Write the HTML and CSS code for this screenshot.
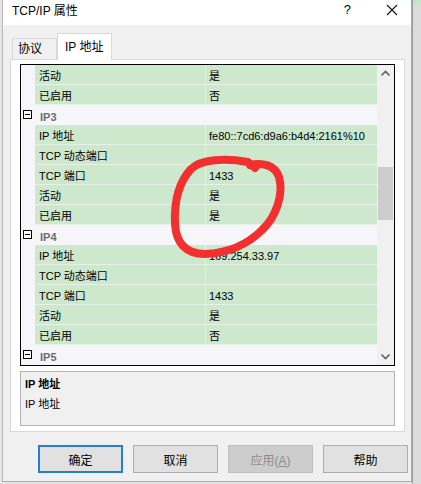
FILE: index.html
```html
<!DOCTYPE html>
<html lang="zh-CN">
<head>
    <meta charset="UTF-8">
    <title>TCP/IP 属性</title>
    <link rel="stylesheet" href="styles.css">
</head>
<body>

<div class="screen">
    <div class="dialog">
        <div class="titlebar">
            <span class="title">TCP/IP 属性</span>
            <span class="help">?</span>
            <svg class="close" width="12" height="12" viewBox="0 0 12 12">
                <path d="M1 1 L11 11 M11 1 L1 11" stroke="#111" stroke-width="1.1" fill="none"/>
            </svg>
        </div>

        <div class="content">
            <div class="tabs">
                <div class="tab">协议</div>
                <div class="tab active">IP 地址</div>
            </div>

            <div class="panel">
                <div class="grid">
                    <div class="rows">
                        <div class="row"><span class="gutter"></span><span class="name">活动</span><span class="value">是</span></div>
                        <div class="row"><span class="gutter"></span><span class="name">已启用</span><span class="value">否</span></div>
                        <div class="row cat"><span class="gutter"><i class="box"></i></span><span class="label">IP3</span></div>
                        <div class="row"><span class="gutter"></span><span class="name">IP 地址</span><span class="value">fe80::7cd6:d9a6:b4d4:2161%10</span></div>
                        <div class="row"><span class="gutter"></span><span class="name">TCP 动态端口</span><span class="value"></span></div>
                        <div class="row"><span class="gutter"></span><span class="name">TCP 端口</span><span class="value">1433</span></div>
                        <div class="row"><span class="gutter"></span><span class="name">活动</span><span class="value">是</span></div>
                        <div class="row"><span class="gutter"></span><span class="name">已启用</span><span class="value">是</span></div>
                        <div class="row cat"><span class="gutter"><i class="box"></i></span><span class="label">IP4</span></div>
                        <div class="row"><span class="gutter"></span><span class="name">IP 地址</span><span class="value">169.254.33.97</span></div>
                        <div class="row"><span class="gutter"></span><span class="name">TCP 动态端口</span><span class="value"></span></div>
                        <div class="row"><span class="gutter"></span><span class="name">TCP 端口</span><span class="value">1433</span></div>
                        <div class="row"><span class="gutter"></span><span class="name">活动</span><span class="value">是</span></div>
                        <div class="row"><span class="gutter"></span><span class="name">已启用</span><span class="value">否</span></div>
                        <div class="row cat"><span class="gutter"><i class="box"></i></span><span class="label">IP5</span></div>
                    </div>
                    <div class="scrollbar">
                        <svg class="arrow" width="17" height="17" viewBox="0 0 17 17">
                            <path d="M4.5 10.5 L8.5 6.5 L12.5 10.5" stroke="#606060" stroke-width="1.6" fill="none"/>
                        </svg>
                        <div class="track"><div class="thumb"></div></div>
                        <svg class="arrow" width="17" height="17" viewBox="0 0 17 17">
                            <path d="M4.5 6.5 L8.5 10.5 L12.5 6.5" stroke="#606060" stroke-width="1.6" fill="none"/>
                        </svg>
                    </div>
                </div>

                <div class="desc">
                    <b>IP 地址</b>
                    <span>IP 地址</span>
                </div>
            </div>

            <div class="buttons">
                <button class="btn default">确定</button>
                <button class="btn">取消</button>
                <button class="btn" disabled>应用(<u>A</u>)</button>
                <button class="btn">帮助</button>
            </div>
        </div>
    </div>
    <div class="edge"></div>

    <!-- red marker circle drawn on the screenshot -->
    <svg class="ink" width="421" height="484" viewBox="0 0 421 484">
        <path d="M250 165 C262 162, 275 165, 279 177 C284 194, 276 217, 262 230 C248 244, 228 253, 205 254 C185 254, 176 242, 175 224 C174 202, 179 182, 191 169 C201 159, 225 158, 248 162 L255 168"
              stroke="#f2302f" stroke-width="8" fill="none" stroke-linecap="round" stroke-linejoin="round"/>
    </svg>
</div>

</body>
</html>
```

FILE: styles.css
```css
body {
    margin: 0;
    font-family: 'Liberation Sans', 'Noto Sans CJK SC', sans-serif;
    color: #000;
}
.screen {
    position: relative;
    display: flex;
    width: 421px;
    height: 484px;
    overflow: hidden;
    background: #e4e4e4;
}
.dialog {
    margin-left: 2px;
    width: 409px;
    height: 481px;
    border-left: 1px solid #b8b8b8;
    border-right: 1px solid #8fb2d8;
    border-bottom: 1px solid #8fb2d8;
    background: #f0f0f0;
}
.edge {
    width: 8px;
    border-left: 1px solid #9a9a9a;
    background: linear-gradient(#c9e3c9 0, #c9e3c9 6px, #dcdcdc 6px);
}

/* title bar */
.titlebar {
    height: 19px;
    padding-bottom: 6px;
    background: #fff;
    display: flex;
    align-items: center;
    font-size: 12px;
}
.title {
    padding-left: 9px;
    flex: 1;
}
.help {
    font-size: 13px;
    margin-right: 35px;
}
.close {
    margin-right: 13px;
}

/* tabs */
.content {
    padding-top: 8px;
}
.tabs {
    display: flex;
    align-items: flex-end;
    height: 26px;
    padding-left: 9px;
}
.tab {
    height: 21px;
    width: 45px;
    box-sizing: border-box;
    border: 1px solid #d9d9d9;
    border-bottom: none;
    font-size: 12px;
    line-height: 21px;
    padding-left: 5px;
}
.tab.active {
    position: relative;
    z-index: 1;
    height: 27px;
    width: 55px;
    margin-bottom: -1px;
    background: #fff;
    padding-left: 7px;
    line-height: 26px;
}
.panel {
    margin-left: 7px;
    width: 395px;
    height: 373px;
    box-sizing: border-box;
    border: 1px solid #d9d9d9;
    background: #fff;
    padding: 4px 0 0 9px;
}

/* property grid */
.grid {
    display: flex;
    width: 375px;
    height: 302px;
    box-sizing: border-box;
    border: 1px solid #000;
}
.rows {
    width: 356px;
}
.row {
    display: grid;
    grid-template-columns: 14px 171px 171px;
    height: 20px;
    font-size: 11px;
}
.gutter {
    background: #f5f5fa;
    position: relative;
}
.name, .value {
    height: 19px;
    background: #cde8cd;
    border-bottom: 1px solid #e6f2e6;
    line-height: 23px;
    padding-left: 4px;
    white-space: nowrap;
    overflow: hidden;
}
.name {
    border-right: 1px solid #e6f2e6;
}
.value {
    padding-left: 3px;
}
.row.cat {
    background: #f5f5fa;
}
.label {
    grid-column: 2 / 4;
    height: 20px;
    overflow: hidden;
    font-weight: bold;
    color: #6d6d6d;
    line-height: 25px;
    padding-left: 5px;
}
.box {
    position: absolute;
    left: 2px;
    top: 5px;
    width: 7px;
    height: 7px;
    border: 1px solid #000;
    background: #fff;
}
.box::after {
    content: "";
    position: absolute;
    left: 1px;
    right: 1px;
    top: 3px;
    height: 1px;
    background: #000;
}
.scrollbar {
    width: 17px;
    display: flex;
    flex-direction: column;
    background: #f0f0f0;
}
.arrow {
    display: block;
}
.track {
    flex: 1;
    padding-top: 85px;
}
.thumb {
    margin: 0 1px;
    height: 53px;
    background: #cdcdcd;
}

/* description */
.desc {
    margin-top: 5px;
    width: 375px;
    height: 55px;
    box-sizing: border-box;
    border: 1px solid #b4b4b4;
    background: #f0f0f0;
    padding: 3px 4px;
    font-size: 11px;
    display: flex;
    flex-direction: column;
    gap: 4px;
}

/* buttons */
.buttons {
    display: flex;
    gap: 10px;
    padding: 13px 0 0 35px;
}
.btn {
    width: 85px;
    height: 28px;
    border: 1px solid #adadad;
    background: #e1e1e1;
    font-family: 'Liberation Sans', 'Noto Sans CJK SC', sans-serif;
    font-size: 12px;
    color: #000;
    padding: 0;
}
.btn.default {
    border: 2px solid #2a7ccd;
}
.btn:disabled {
    background: #cccccc;
    border-color: #bfbfbf;
    color: #8d8d8d;
}

.ink {
    position: absolute;
    left: 0;
    top: 0;
    pointer-events: none;
}
```
